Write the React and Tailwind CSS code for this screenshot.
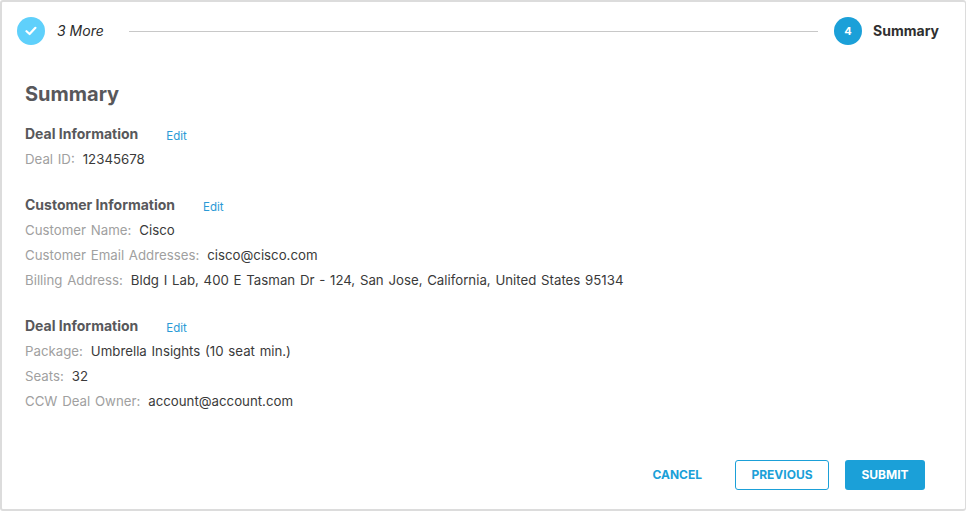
import React from "react";

function Field({ label, value }) {
  return (
    <div className="h-[25px] flex items-center text-[13.25px] leading-[25px] [word-spacing:1px]">
      <span className="text-[#a0a0a0] mr-[8px]">{label}</span>
      <span className="text-[#3a3a3a]">{value}</span>
    </div>
  );
}

function Section({ title, fields, className }) {
  return (
    <section className={className}>
      <div className="h-[26px] flex items-start">
        <h3 className="text-[14px] font-bold text-[#58585b] leading-[25px]">{title}</h3>
        <a className="text-[11.5px] text-[#2a9ad6] leading-[25px] mt-[3px] ml-[28px]">Edit</a>
      </div>
      {fields.map((f) => (
        <Field key={f[0]} label={f[0]} value={f[1]} />
      ))}
    </section>
  );
}

export default function App() {
  return (
    <div className="w-[966px] h-[511px] bg-white border-2 border-r-[1px] border-[#dcdcdc] rounded-[3px] font-['Inter','Liberation_Sans',sans-serif] flex flex-col overflow-hidden">
      <header className="flex items-center h-[57px] pl-[15px] pr-[26px] pt-[1px]">
        <div className="w-[28px] h-[28px] rounded-full bg-[#5fd0fb] flex items-center justify-center shrink-0">
          <svg width="12" height="10" viewBox="0 0 12 10" fill="none">
            <path d="M1.5 5.2 L4.6 8 L10.4 1.8" stroke="white" strokeWidth="2.2" strokeLinecap="round" strokeLinejoin="round" />
          </svg>
        </div>
        <span className="ml-[12px] mb-[2px] italic text-[14px] text-[#2b2b2b]">3 More</span>
        <div className="flex-1 h-px bg-[#c8c8c8] ml-[25px] mr-[16px]" />
        <div className="w-[28px] h-[28px] rounded-full bg-[#1ba0d8] flex items-center justify-center shrink-0 text-white text-[11px] font-bold">4</div>
        <span className="ml-[11px] mb-[2px] font-bold text-[14px] text-[#2f2f2f]">Summary</span>
      </header>
      <main className="pl-[23px] flex-1 pt-[19px]">
        <h2 className="text-[20px] font-bold text-[#58585b] leading-[32px]">Summary</h2>
        <Section className="mt-[11px]" title="Deal Information" fields={[["Deal ID:", "12345678"]]} />
        <Section className="mt-[20px]" title="Customer Information" fields={[
          ["Customer Name:", "Cisco"],
          ["Customer Email Addresses:", "cisco@cisco.com"],
          ["Billing Address:", "Bldg I Lab, 400 E Tasman Dr - 124, San Jose, California, United States 95134"],
        ]} />
        <Section className="mt-[20px]" title="Deal Information" fields={[
          ["Package:", "Umbrella Insights (10 seat min.)"],
          ["Seats:", "32"],
          ["CCW Deal Owner:", "account@account.com"],
        ]} />
      </main>
      <footer className="flex items-center justify-end h-[30px] mb-[19px] pr-[40px] text-[12px] font-bold">
        <button className="text-[#1ba0d8] mr-[33px]">CANCEL</button>
        <button className="w-[94px] h-[30px] border border-[#1ba0d8] rounded-[3px] text-[#1ba0d8] mr-[16px]">PREVIOUS</button>
        <button className="w-[80px] h-[30px] bg-[#1ba0d8] rounded-[3px] text-white">SUBMIT</button>
      </footer>
    </div>
  );
}
